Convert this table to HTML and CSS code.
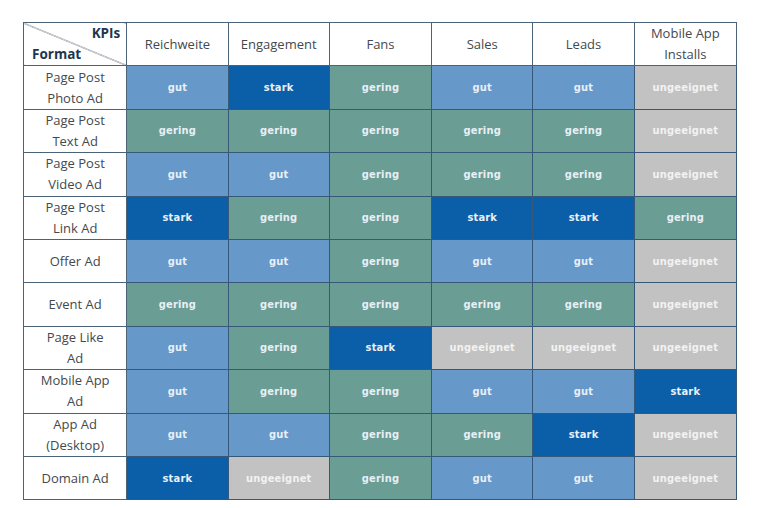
FILE: index.html
```html
<!DOCTYPE html>
<html lang="de">
<head>
<meta charset="utf-8">
<title>KPIs nach Format</title>
<link rel="stylesheet" href="styles.css">
</head>
<body>
<table class="matrix">
  <colgroup>
    <col class="c-first"><col class="c-a"><col class="c-a"><col class="c-b"><col class="c-a"><col class="c-a"><col class="c-b">
  </colgroup>
  <thead>
    <tr>
      <th class="corner"><span class="kpi">KPIs</span><span class="fmt">Format</span></th>
      <th>Reichweite</th>
      <th>Engagement</th>
      <th>Fans</th>
      <th>Sales</th>
      <th>Leads</th>
      <th>Mobile App<br>Installs</th>
    </tr>
  </thead>
  <tbody>
    <tr><th>Page Post<br>Photo Ad</th><td class="gut">gut</td><td class="stark">stark</td><td class="gering">gering</td><td class="gut">gut</td><td class="gut">gut</td><td class="un">ungeeignet</td></tr>
    <tr><th>Page Post<br>Text Ad</th><td class="gering">gering</td><td class="gering">gering</td><td class="gering">gering</td><td class="gering">gering</td><td class="gering">gering</td><td class="un">ungeeignet</td></tr>
    <tr><th>Page Post<br>Video Ad</th><td class="gut">gut</td><td class="gut">gut</td><td class="gering">gering</td><td class="gering">gering</td><td class="gering">gering</td><td class="un">ungeeignet</td></tr>
    <tr><th>Page Post<br>Link Ad</th><td class="stark">stark</td><td class="gering">gering</td><td class="gering">gering</td><td class="stark">stark</td><td class="stark">stark</td><td class="gering">gering</td></tr>
    <tr><th>Offer Ad</th><td class="gut">gut</td><td class="gut">gut</td><td class="gering">gering</td><td class="gut">gut</td><td class="gut">gut</td><td class="un">ungeeignet</td></tr>
    <tr><th>Event Ad</th><td class="gering">gering</td><td class="gering">gering</td><td class="gering">gering</td><td class="gering">gering</td><td class="gering">gering</td><td class="un">ungeeignet</td></tr>
    <tr><th>Page Like<br>Ad</th><td class="gut">gut</td><td class="gering">gering</td><td class="stark">stark</td><td class="un">ungeeignet</td><td class="un">ungeeignet</td><td class="un">ungeeignet</td></tr>
    <tr><th>Mobile App<br>Ad</th><td class="gut">gut</td><td class="gering">gering</td><td class="gering">gering</td><td class="gut">gut</td><td class="gut">gut</td><td class="stark">stark</td></tr>
    <tr><th>App Ad<br>(Desktop)</th><td class="gut">gut</td><td class="gut">gut</td><td class="gering">gering</td><td class="gering">gering</td><td class="stark">stark</td><td class="un">ungeeignet</td></tr>
    <tr><th>Domain Ad</th><td class="stark">stark</td><td class="un">ungeeignet</td><td class="gering">gering</td><td class="gut">gut</td><td class="gut">gut</td><td class="un">ungeeignet</td></tr>
  </tbody>
</table>
</body>
</html>
```

FILE: styles.css
```css
html, body {
  margin: 0;
  padding: 0;
  background: #ffffff;
}

body {
  padding: 22px 0 0 23px;
  font-family: "Open Sans", "DejaVu Sans", sans-serif;
}

.matrix {
  border-collapse: collapse;
  table-layout: fixed;
  width: 714px;
  border: 1px solid #8a9aa8;
}

.c-first { width: 103px; }
.c-a { width: 101px; }
.c-b { width: 102px; }

.matrix th,
.matrix td {
  border: 1px solid #4a6378;
  height: 42.4px;
  padding: 0;
  text-align: center;
  vertical-align: middle;
}

.matrix th {
  font-weight: normal;
  font-size: 13px;
  line-height: 21px;
  color: #44494d;
  background: #ffffff;
}

.corner {
  position: relative;
  background: linear-gradient(to top right, transparent calc(50% - 0.6px), #4a5560 50%, transparent calc(50% + 0.6px)) !important;
}

.corner .kpi,
.corner .fmt {
  position: absolute;
  font-weight: bold;
  font-size: 13.5px;
  line-height: 16px;
  color: #1d3650;
}

.corner .kpi {
  top: 2px;
  right: 6px;
}

.corner .fmt {
  bottom: 3px;
  left: 8px;
}

.matrix td {
  font-family: "DejaVu Sans Condensed", "DejaVu Sans", sans-serif;
  font-stretch: condensed;
  font-weight: bold;
  font-size: 11px;
  letter-spacing: 0.2px;
  color: #e8eff6;
  border-color: #36597a;
}

.gut { background: #6699c9; }
.stark { background: #0b5fa8; }
.gering { background: #6a9e95; }
.un { background: #c2c2c2; color: #f2f2f2 !important; }
```
